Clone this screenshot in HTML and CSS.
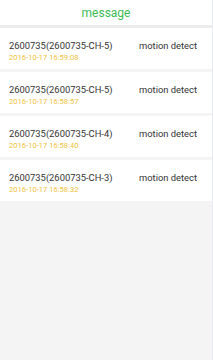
FILE: index.html
```html
<!DOCTYPE html>
<html>
<head>
<meta charset="utf-8">
<link rel="stylesheet" href="styles.css">
</head>
<body>
<div class="app">
  <header class="header">message</header>
  <ul class="list">
    <li class="item">
      <div class="row"><span class="device">2600735(2600735-CH-5)</span><span class="type">motion detect</span></div>
      <div class="time">2016-10-17 16:59:08</div>
    </li>
    <li class="item">
      <div class="row"><span class="device">2600735(2600735-CH-5)</span><span class="type">motion detect</span></div>
      <div class="time">2016-10-17 16:58:57</div>
    </li>
    <li class="item">
      <div class="row"><span class="device">2600735(2600735-CH-4)</span><span class="type">motion detect</span></div>
      <div class="time">2016-10-17 16:58:40</div>
    </li>
    <li class="item">
      <div class="row"><span class="device">2600735(2600735-CH-3)</span><span class="type">motion detect</span></div>
      <div class="time">2016-10-17 16:58:32</div>
    </li>
  </ul>
</div>
</body>
</html>
```
FILE: styles.css
```css
html, body {
  margin: 0;
  padding: 0;
  height: 100%;
}
body {
  background: #f4f4f4;
  font-family: Roboto, "Liberation Sans", sans-serif;
}
.app {
  min-height: 100%;
  border-right: 1px solid #e6ebf2;
  box-sizing: border-box;
}
.header {
  height: 25px;
  background: #fff;
  color: #3cbb56;
  font-size: 12px;
  line-height: 27px;
  text-align: center;
  border-bottom: 3px solid #ececec;
}
.list {
  list-style: none;
  margin: 0;
  padding: 0;
  display: flex;
  flex-direction: column;
  gap: 3px;
}
.item {
  background: #fff;
  height: 41px;
  box-sizing: border-box;
  padding: 12px 0 0 9px;
}
.row {
  display: flex;
  font-size: 9.4px;
  line-height: 12px;
  color: #333;
}
.device {
  width: 130px;
}
.time {
  font-size: 7.6px;
  line-height: 10px;
  color: #f0c23c;
  margin-top: 1px;
}
```
